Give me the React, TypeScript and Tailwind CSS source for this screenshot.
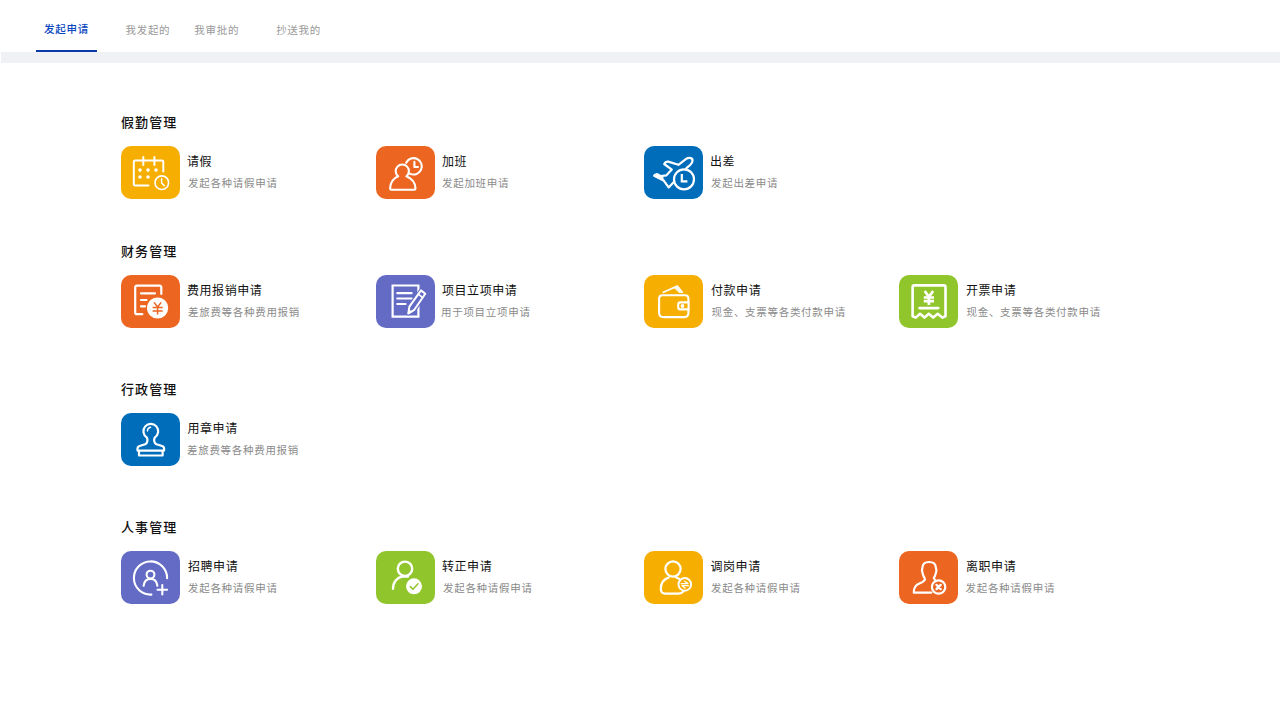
import React, { useState } from 'react';

interface ApprovalItem {
  id: string;
  title: string;
  desc: string;
  tile: string;
  icon: React.FC;
  titlePad: string;
  descPad: string;
}

interface ApprovalGroup {
  name: string;
  spacing: string;
  items: ApprovalItem[];
}

const LeaveIcon = () => (
  <g strokeWidth="2">
    <path d="M42.3 25.5V15.9Q42.3 14.5 41 14.5H14.2Q12.8 14.5 12.8 15.9V38.3Q12.8 39.6 14.2 39.6H27.5" />
    <path d="M22.3 11V19M33.4 11V19" />
    <g fill="#fff" stroke="none">
      <circle cx="19" cy="24.1" r="1.8" />
      <circle cx="27" cy="24.1" r="1.8" />
      <circle cx="35" cy="24.1" r="1.8" />
      <circle cx="19" cy="31" r="1.8" />
      <circle cx="27" cy="31" r="1.8" />
    </g>
    <circle cx="40.8" cy="36.7" r="6.8" strokeWidth="1.6" />
    <path d="M40.6 32.8V37L43.2 39.6" strokeWidth="1.5" />
  </g>
);

const OvertimeIcon = () => (
  <g strokeWidth="2.1">
    <path d="M22.2 30.3A6.6 6.6 0 1 1 30.4 30.3C36 32.5 39.3 36.5 39.5 42.6Q39.5 43.8 38.3 43.8H15.3Q14.1 43.8 14.1 42.6C14.3 36.5 17 32.5 22.2 30.3Z" />
    <path d="M30.2 16.8A8.2 8.2 0 1 1 33.8 27.6" />
    <path d="M38.4 15.8V21H42" />
  </g>
);

const TripIcon = () => (
  <g strokeWidth="2.2">
    <path d="M29.6 36.2L24.6 41.4L19.6 34.4L10.2 29.8L12.8 28L17 30.2L22.2 29.4L27.8 23.6L20.2 18Q21.5 15.3 24.2 15.6L34.4 18.8L42.2 12.8C45.5 10.8 49.4 12 48.3 15.7C47.7 18 45 20 42.3 22.3" />
    <path d="M11 29.4L18.2 32.4" strokeWidth="3" />
    <circle cx="40" cy="33.3" r="10" />
    <path d="M37.8 28V35.3H43.4" strokeLinecap="butt" strokeLinejoin="miter" />
  </g>
);

const ExpenseIcon = () => (
  <g strokeWidth="2.2">
    <path d="M40.3 19V12.4Q40.3 10.6 38.5 10.6H16Q14.2 10.6 14.2 12.4V37.4Q14.2 39.2 16 39.2H21.3" />
    <path d="M20 18.3H34M20 25H25.5M20 31.3H24" />
    <circle cx="36.6" cy="33" r="10.6" fill="#fff" stroke="none" />
    <path d="M33 27.4L36.6 32L40.2 27.4M31.6 32.6H41.7M31.6 35.9H41.7M36.6 32V39.4" stroke="#ec6622" strokeWidth="1.5" strokeLinecap="butt" />
  </g>
);

const ProjectIcon = () => (
  <g strokeWidth="2.2">
    <path d="M16.6 10.5H42.4V41.6H16.6Z" strokeLinejoin="miter" />
    <path d="M21.3 18.2H35.6M21.3 23.5H35.6M21.3 29H29.5" />
    <path d="M32.3 38.5L33.4 31.6L45 15.4L49.3 18.8L38.3 34.8Z" fill="#636bc5" stroke="#636bc5" strokeWidth="4" />
    <path d="M32.3 38.5L33.4 31.6L45 15.4L49.3 18.8L38.3 34.8Z" strokeWidth="2" />
    <path d="M42.2 19.2L46.5 22.4" strokeWidth="1.5" />
    <path d="M32.3 38.6L32.9 34.8L35.5 36.7Z" fill="#fff" strokeWidth="1" />
  </g>
);

const PaymentIcon = () => (
  <g strokeWidth="2.1">
    <path d="M19.4 17.3L33.3 11.1L38.2 17.2" strokeWidth="1.8" />
    <path d="M30.8 13L33.3 11.4L38.6 17.4H35.4Z" fill="#fff" strokeWidth="0.8" />
    <path d="M44.4 27.3V23.6Q44.4 20.2 41 20.2H18.6Q15.1 20.2 15.1 23.6V37.7Q15.1 42.1 19.5 42.1H40.4Q44.4 42.1 44.4 38.1V34.4" />
    <path d="M44.6 27.4H36.4Q34.2 27.4 34.2 29.6V32.2Q34.2 34.4 36.4 34.4H44.6Z" />
    <circle cx="38.5" cy="31" r="1.9" fill="#fff" stroke="none" />
  </g>
);

const InvoiceIcon = () => (
  <g strokeWidth="2.6">
    <path d="M13.6 41.3V12.1Q13.6 10.4 15.3 10.4H44.8Q46.5 10.4 46.5 12.1V41.3L43.2 42.6L38.7 38.8L34.2 42.6L29.8 38.8L25.5 42.6L21 38.8L16.8 42.6Z" />
    <path d="M25.7 16L29.9 21.9L34.1 16M24.8 22.5H35M24.8 26.2H35M29.9 22V30" strokeWidth="2.7" strokeLinecap="butt" />
    <path d="M20.6 33.1H39.2" strokeWidth="2.7" />
  </g>
);

const StampIcon = () => (
  <g strokeWidth="2.2">
    <path d="M16.6 37.6C16 35 16.9 33.4 19.3 32.8L24.2 31.2C26.8 30 27 26.6 25.7 24.4A7.4 7.4 0 1 1 33.9 24.4C32.6 26.6 32.8 30 35.4 31.2L40.4 32.8C42.8 33.4 43.6 35 43 37.6Z" />
    <path d="M18 37.8V42.5H41.6V37.8" />
    <path d="M26.4 18A3.9 3.9 0 0 1 29.6 14.2" strokeWidth="1.4" />
  </g>
);

const RecruitIcon = () => (
  <g strokeWidth="2.1">
    <path d="M46.1 27.2A16.6 16.6 0 1 0 30.4 43.6" />
    <circle cx="29.5" cy="23.6" r="3.9" />
    <path d="M22.6 34.8C23.2 30.2 26 27.9 29.5 27.9S35.8 30.2 36.4 34.8" />
    <path d="M41.3 34V43.4M36.5 38.7H46.1" />
  </g>
);

const RegularIcon = () => (
  <g strokeWidth="2.4">
    <circle cx="29" cy="17.8" r="7.2" />
    <path d="M17 37.8C17 31 21 26.4 26.4 25.5H32" />
    <circle cx="38" cy="35.3" r="8" fill="#fff" stroke="none" />
    <path d="M34.3 35.6L37 38.3L42 32.8" stroke="#90c52c" strokeWidth="1.5" />
  </g>
);

const TransferIcon = () => (
  <g strokeWidth="2.2">
    <circle cx="29" cy="18" r="7.6" />
    <path d="M24.6 26.6C19.6 28.3 16.8 32.6 16.8 38Q16.8 42.6 21.2 42.6H34Q37.5 42.8 39.5 40.4" />
    <path d="M31.8 26.3L35.5 28" />
    <circle cx="40.8" cy="33.4" r="6.3" strokeWidth="2" />
    <path d="M37.2 32.6H43.9L40.8 30.2M44.6 34.6H37.9L41 37" strokeWidth="1.3" />
  </g>
);

const ResignIcon = () => (
  <g strokeWidth="2.2">
    <path d="M32.4 41.6H14.8C14.6 37 16.3 34 20.4 32.4C24.8 30.7 26.8 29 25.5 26.7C23.8 25 24.2 23.5 23.5 21.6C22.2 19 23.4 18 23.5 16.2C23.8 12.8 26 11 30 11S36.6 12.8 36.8 16.2C36.9 18 38.2 19 37 21.6C36.2 23.5 36.4 25 34.8 27L36 29" />
    <circle cx="39.6" cy="36" r="6.7" />
    <path d="M37.5 33.9L41.7 38.1M41.7 33.9L37.5 38.1" strokeWidth="2.3" />
  </g>
);

const tabs = [
  { id: 'create', label: '发起申请', margin: 'ml-9' },
  { id: 'mine', label: '我发起的', margin: 'ml-[20.5px]' },
  { id: 'review', label: '我审批的', margin: 'ml-2' },
  { id: 'cc', label: '抄送我的', margin: 'ml-[21px]' },
];

const groups: ApprovalGroup[] = [
  {
    name: '假勤管理',
    spacing: 'mt-[50px]',
    items: [
      { id: 'leave', title: '请假', desc: '发起各种请假申请', tile: 'bg-[#f6ae00]', icon: LeaveIcon, titlePad: 'pl-[7px]', descPad: 'pl-2' },
      { id: 'overtime', title: '加班', desc: '发起加班申请', tile: 'bg-[#ec6622]', icon: OvertimeIcon, titlePad: 'pl-[7px]', descPad: 'pl-[7px]' },
      { id: 'trip', title: '出差', desc: '发起出差申请', tile: 'bg-[#006dbb]', icon: TripIcon, titlePad: 'pl-[7px]', descPad: 'pl-2' },
    ],
  },
  {
    name: '财务管理',
    spacing: 'mt-[43px]',
    items: [
      { id: 'expense', title: '费用报销申请', desc: '差旅费等各种费用报销', tile: 'bg-[#ec6622]', icon: ExpenseIcon, titlePad: 'pl-[7px]', descPad: 'pl-2' },
      { id: 'project', title: '项目立项申请', desc: '用于项目立项申请', tile: 'bg-[#636bc5]', icon: ProjectIcon, titlePad: 'pl-[7px]', descPad: 'pl-[6px]' },
      { id: 'payment', title: '付款申请', desc: '现金、支票等各类付款申请', tile: 'bg-[#f6ae00]', icon: PaymentIcon, titlePad: 'pl-2', descPad: 'pl-[8.5px]' },
      { id: 'invoice', title: '开票申请', desc: '现金、支票等各类付款申请', tile: 'bg-[#90c52c]', icon: InvoiceIcon, titlePad: 'pl-2', descPad: 'pl-[8.5px]' },
    ],
  },
  {
    name: '行政管理',
    spacing: 'mt-[52px]',
    items: [
      { id: 'stamp', title: '用章申请', desc: '差旅费等各种费用报销', tile: 'bg-[#006dbb]', icon: StampIcon, titlePad: 'pl-[7.5px]', descPad: 'pl-[7px]' },
    ],
  },
  {
    name: '人事管理',
    spacing: 'mt-[52px]',
    items: [
      { id: 'recruit', title: '招聘申请', desc: '发起各种请假申请', tile: 'bg-[#636bc5]', icon: RecruitIcon, titlePad: 'pl-2', descPad: 'pl-2' },
      { id: 'regular', title: '转正申请', desc: '发起各种请假申请', tile: 'bg-[#90c52c]', icon: RegularIcon, titlePad: 'pl-[7px]', descPad: 'pl-2' },
      { id: 'transfer', title: '调岗申请', desc: '发起各种请假申请', tile: 'bg-[#f6ae00]', icon: TransferIcon, titlePad: 'pl-[7.5px]', descPad: 'pl-2' },
      { id: 'resign', title: '离职申请', desc: '发起各种请假申请', tile: 'bg-[#ec6622]', icon: ResignIcon, titlePad: 'pl-2', descPad: 'pl-[7.5px]' },
    ],
  },
];

const ApprovalCard: React.FC<{ item: ApprovalItem }> = ({ item }) => (
  <button className="flex items-start text-left">
    <span className={`block w-[59px] h-[53px] rounded-[10px] shrink-0 ${item.tile}`}>
      <svg width="59" height="53" viewBox="0 0 59 53" fill="none" stroke="#fff" strokeLinecap="round" strokeLinejoin="round">
        <item.icon />
      </svg>
    </span>
    <span className="flex flex-col pt-1.5 whitespace-nowrap">
      <span className={`text-[12px] leading-[18px] tracking-[0.55px] text-[#111] ${item.titlePad}`}>{item.title}</span>
      <span className={`mt-1 text-[10.5px] leading-[18px] tracking-[0.7px] text-[#8a8a8a] ${item.descPad}`}>{item.desc}</span>
    </span>
  </button>
);

const App: React.FC = () => {
  const [activeTab, setActiveTab] = useState('create');

  return (
    <div className="w-full min-h-screen bg-white font-['Noto_Sans_CJK_SC','Noto_Sans',sans-serif]">
      {/* Tabs */}
      <nav className="flex h-[52px]">
        {tabs.map(tab => (
          <button
            key={tab.id}
            onClick={() => setActiveTab(tab.id)}
            className={`h-[52px] px-2 border-b-2 text-[10.5px] leading-[18px] tracking-[0.7px] whitespace-nowrap ${tab.margin} ${activeTab === tab.id ? 'w-[61px] pt-2 border-[#0c3aa8] text-[#0a48c0] font-medium' : 'border-transparent text-[#999] pt-[9px]'}`}
          >
            {tab.label}
          </button>
        ))}
      </nav>
      <div className="h-[11px] ml-px bg-[#eff1f5]" />

      {/* Approval groups */}
      <main className="pl-[121px]">
        {groups.map(group => (
          <section key={group.name} className={group.spacing}>
            <h2 className="h-[18px] mb-[15px] text-[13px] leading-[18px] tracking-[1.1px] text-[#111] font-medium">{group.name}</h2>
            <div className="grid grid-cols-[255px_268px_255px_255px]">
              {group.items.map(item => (
                <ApprovalCard key={item.id} item={item} />
              ))}
            </div>
          </section>
        ))}
      </main>
    </div>
  );
};

export default App;
